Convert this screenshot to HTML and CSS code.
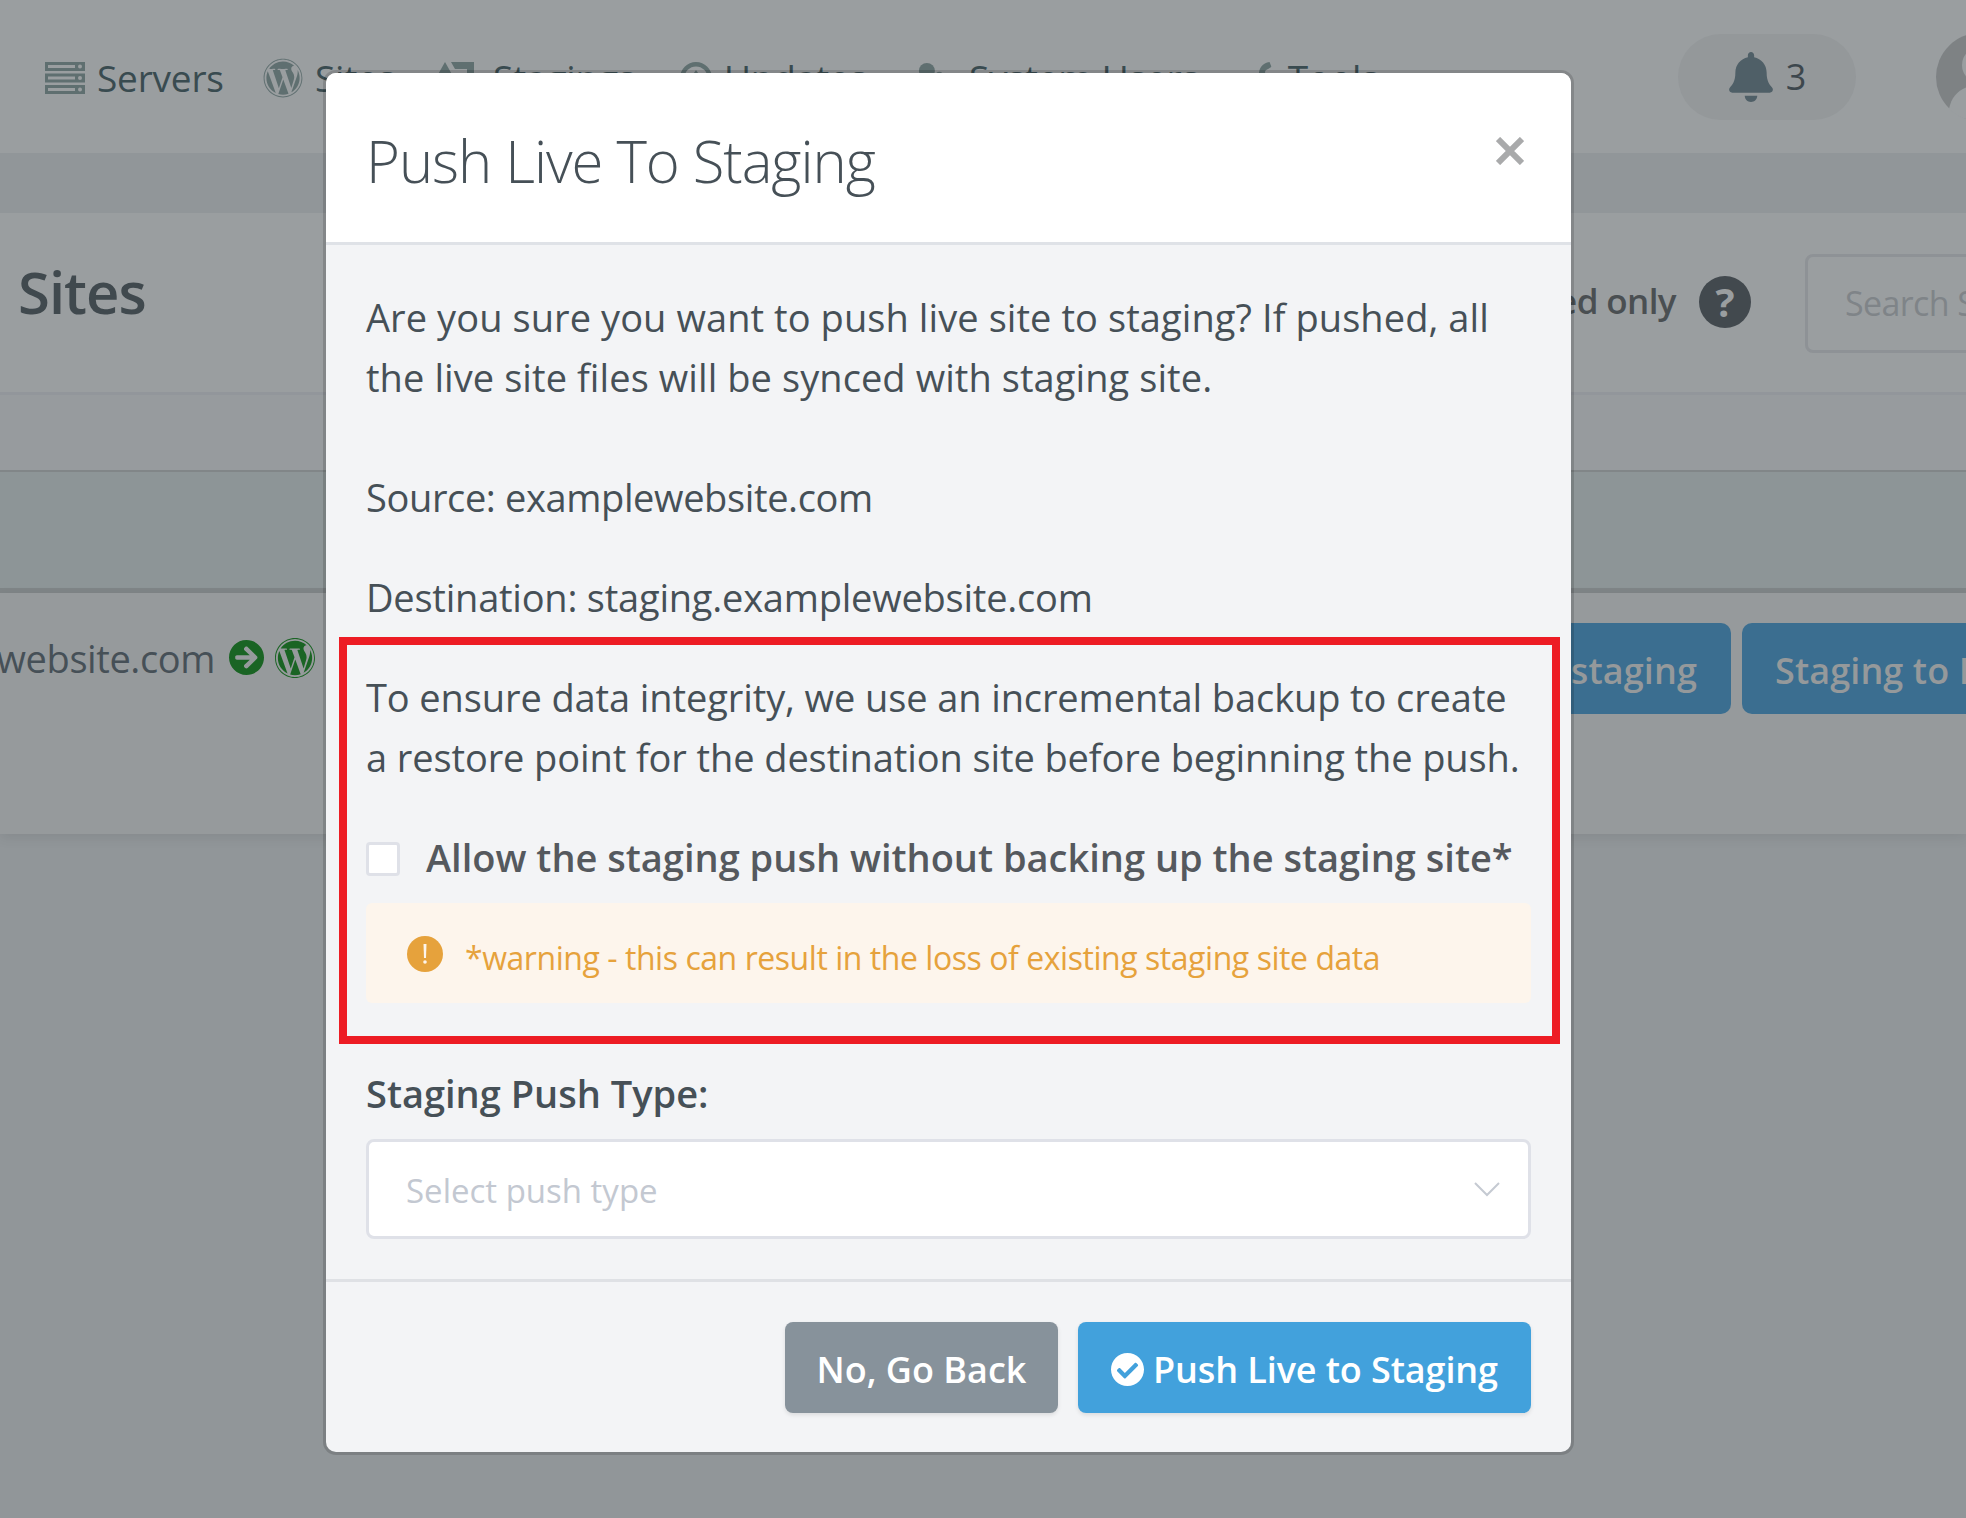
FILE: index.html
```html
<!DOCTYPE html>
<html lang="en">
<head>
    <meta charset="UTF-8">
    <meta name="viewport" content="width=device-width, initial-scale=1.0">
    <title>Push Live To Staging</title>
    <link rel="stylesheet" href="styles.css">
</head>
<body>
    <!-- Top navigation -->
    <header class="topnav">
        <nav class="nav-links">
            <a class="nav-item nav-servers">
                <svg class="nav-icon" viewBox="0 0 40 32"><path fill="#5f6f70" d="M0 0h40v9H0zM0 11.500h40v9H0zM0 23h40v9H0z"/><path fill="#9a9ea0" d="M3 3h27v3H3zM3 14.500h27v3H3zM3 26h27v3H3z"/><circle fill="#9a9ea0" cx="35" cy="4.500" r="2"/><circle fill="#9a9ea0" cx="35" cy="16" r="2"/><circle fill="#9a9ea0" cx="35" cy="27.500" r="2"/></svg>
                Servers
            </a>
            <a class="nav-item nav-sites">
                <svg class="nav-icon wp-icon" viewBox="0 0 512 512"><path fill="#5f6f70" d="M61.700 169.400l101.500 278C92.200 413 43.300 340.200 43.300 256c0-30.900 6.600-60.100 18.400-86.600zm337.900 75.900c0-26.300-9.400-44.500-17.500-58.700-10.800-17.500-20.900-32.400-20.900-49.900 0-19.600 14.800-37.800 35.700-37.800.9 0 1.800.1 2.800.2-37.900-34.700-88.300-55.900-143.700-55.900-74.300 0-139.700 38.100-177.800 95.900 5 .2 9.700.3 13.700.3 22.200 0 56.700-2.700 56.700-2.700 11.500-.7 12.800 16.200 1.400 17.500 0 0-11.500 1.300-24.300 2l77.500 230.400L249.800 247l-33.100-90.800c-11.500-.7-22.300-2-22.300-2-11.500-.7-10.100-18.200 1.300-17.500 0 0 35.100 2.700 56 2.700 22.200 0 56.700-2.700 56.700-2.700 11.500-.7 12.800 16.200 1.400 17.500 0 0-11.500 1.300-24.300 2l76.900 228.700 21.200-70.900c9-29.400 16-50.500 16-68.700zm-139.900 29.300l-63.800 185.500c19.100 5.600 39.200 8.700 60.100 8.700 24.800 0 48.500-4.300 70.600-12.100-.6-.9-1.100-1.900-1.500-2.900l-65.400-179.200zm183-120.700c.9 6.800 1.400 14 1.400 21.900 0 21.600-4 45.800-16.200 76.200l-65 187.900C426.200 403 468.700 334.500 468.700 256c0-37-9.400-71.800-26-102.100zM504 256c0 136.800-111.300 248-248 248C119.200 504 8 392.700 8 256 8 119.200 119.200 8 256 8c136.700 0 248 111.200 248 248zm-11.400 0c0-130.500-106.200-236.600-236.600-236.600C125.500 19.400 19.400 125.500 19.400 256S125.600 492.600 256 492.600c130.500 0 236.600-106.100 236.600-236.600z"/></svg>
                Sites
            </a>
            <a class="nav-item nav-stagings">
                <svg class="nav-icon" viewBox="0 0 38 32"><path fill="#5f6f70" d="M9 0l9 16H0zM15 0h23v26h-7V7H19z"/></svg>
                Stagings
            </a>
            <a class="nav-item nav-updates">
                <svg class="nav-icon" viewBox="0 0 36 36"><circle cx="18" cy="18" r="15.500" fill="none" stroke="#5f6f70" stroke-width="5"/><path fill="#5f6f70" d="M18 9l9 13H9z"/></svg>
                Updates
            </a>
            <a class="nav-item nav-users">
                <svg class="nav-icon" viewBox="0 0 28 36"><circle cx="10" cy="10" r="9" fill="#5f6f70"/><circle cx="24" cy="15" r="4" fill="#5f6f70"/></svg>
                System Users
            </a>
            <a class="nav-item nav-tools">
                <svg class="nav-icon" viewBox="0 0 20 36"><path fill="#5f6f70" d="M13 0C5 1 1 7 1 14c0 6 3 10 7 12V11c0-3 5-3 7-6z"/></svg>
                Tools
            </a>
        </nav>
        <div class="nav-right">
            <div class="bell-pill">
                <svg class="bell-icon" viewBox="0 0 448 512"><path fill="#4f5f67" d="M224 512c35.320 0 63.970-28.650 63.970-64H160.030c0 35.350 28.650 64 63.970 64zm215.390-149.710c-19.320-20.760-55.470-51.990-55.470-154.290 0-77.700-54.480-139.900-127.940-155.160V32c0-17.670-14.320-32-31.980-32s-31.980 14.330-31.980 32v20.840C118.560 68.100 64.080 130.300 64.080 208c0 102.300-36.150 133.530-55.470 154.290-6 6.450-8.660 14.160-8.610 21.710.11 16.400 12.980 32 32.100 32h383.800c19.120 0 32-15.600 32.100-32 .05-7.550-2.610-15.270-8.610-21.710z"/></svg>
                <span>3</span>
            </div>
            <svg class="avatar" viewBox="0 0 88 88"><circle cx="44" cy="44" r="44" fill="#7e8284"/><circle cx="44" cy="32" r="18" fill="#9a9ea0"/><path fill="#9a9ea0" d="M13 76c3-16 15-24 31-24s28 8 31 24c-8 8-19 12-31 12s-23-4-31-12z"/></svg>
        </div>
    </header>

    <div class="subnav"></div>

    <!-- Page heading -->
    <section class="page-head">
        <h1>Sites</h1>
        <div class="head-tools">
            <span class="filter-label">Archived only</span>
            <span class="help-dot">?</span>
            <div class="search-box">Search Sites</div>
        </div>
    </section>

    <div class="table-tools"></div>
    <div class="table-head"></div>

    <!-- Sites table row -->
    <section class="site-row">
        <div class="site-name"><span>examplewebsite.com</span></div>
        <svg class="row-arrow" viewBox="8 8 496 496"><path fill="#1a6424" d="M256 8c137 0 248 111 248 248S393 504 256 504 8 393 8 256 119 8 256 8zm-28.900 143.600l75.500 72.400H120c-13.300 0-24 10.700-24 24v16c0 13.300 10.700 24 24 24h182.600l-75.500 72.400c-9.700 9.300-9.900 24.800-.4 34.300l11 10.900c9.400 9.400 24.600 9.400 33.900 0L404.300 273c9.400-9.400 9.400-24.600 0-33.900L271.600 106.300c-9.400-9.400-24.600-9.400-33.900 0l-11 10.900c-9.500 9.600-9.300 25.100.4 34.400z"/></svg>
        <svg class="row-wp" viewBox="8 8 496 496"><path fill="#1a6424" d="M61.700 169.400l101.500 278C92.200 413 43.300 340.200 43.300 256c0-30.900 6.600-60.100 18.400-86.600zm337.900 75.900c0-26.300-9.400-44.500-17.500-58.700-10.800-17.500-20.900-32.400-20.900-49.900 0-19.600 14.800-37.800 35.700-37.800.9 0 1.800.1 2.800.2-37.900-34.700-88.300-55.900-143.700-55.900-74.300 0-139.700 38.100-177.800 95.900 5 .2 9.700.3 13.700.3 22.200 0 56.700-2.700 56.700-2.700 11.500-.7 12.800 16.200 1.400 17.500 0 0-11.500 1.300-24.300 2l77.500 230.400L249.800 247l-33.100-90.800c-11.500-.7-22.300-2-22.300-2-11.500-.7-10.100-18.200 1.300-17.500 0 0 35.100 2.700 56 2.700 22.200 0 56.700-2.700 56.700-2.700 11.500-.7 12.800 16.200 1.400 17.500 0 0-11.500 1.300-24.300 2l76.900 228.700 21.200-70.900c9-29.400 16-50.500 16-68.700zm-139.900 29.300l-63.800 185.500c19.100 5.600 39.200 8.700 60.100 8.700 24.800 0 48.500-4.300 70.600-12.100-.6-.9-1.100-1.900-1.500-2.900l-65.400-179.200zm183-120.700c.9 6.800 1.400 14 1.400 21.900 0 21.600-4 45.800-16.200 76.200l-65 187.900C426.200 403 468.700 334.500 468.700 256c0-37-9.400-71.800-26-102.100zM504 256c0 136.800-111.300 248-248 248C119.200 504 8 392.700 8 256 8 119.200 119.200 8 256 8c136.700 0 248 111.200 248 248zm-11.400 0c0-130.500-106.200-236.600-236.600-236.600C125.500 19.400 19.400 125.500 19.400 256S125.600 492.600 256 492.600c130.500 0 236.600-106.100 236.600-236.600z"/></svg>
        <div class="row-actions">
            <button class="row-btn">Live to staging</button>
            <button class="row-btn row-btn-last">Staging to Live</button>
        </div>
    </section>

    <!-- Modal over the page -->
    <div class="modal">
        <div class="modal-header">
            <h2>Push Live To Staging</h2>
            <svg class="modal-close" viewBox="0 0 28 28"><path d="M2 2l24 24M26 2L2 26" stroke="#a9aaab" stroke-width="6" fill="none"/></svg>
        </div>
        <div class="modal-body">
            <p class="intro">Are you sure you want to push live site to staging? If pushed, all<br>the live site files will be synced with staging site.</p>
            <p class="source">Source: examplewebsite.com</p>
            <p class="destination">Destination: staging.examplewebsite.com</p>
            <div class="highlight">
                <p class="note">To ensure data integrity, we use an incremental backup to create<br>a restore point for the destination site before beginning the push.</p>
                <label class="check-row"><span class="checkbox"></span>Allow the staging push without backing up the staging site*</label>
                <div class="warning">
                    <svg class="warning-icon" viewBox="0 0 36 36"><circle cx="18" cy="18" r="18" fill="#e6a23c"/><path fill="#fdf5ec" d="M16.500 8h3l-.5 14h-2z"/><circle cx="18" cy="26" r="1.800" fill="#fdf5ec"/></svg>
                    <span>*warning - this can result in the loss of existing staging site data</span>
                </div>
            </div>
            <div class="field-label">Staging Push Type:</div>
            <div class="select-box">
                <span>Select push type</span>
                <svg class="chevron" viewBox="0 0 26 15"><path d="M1 1l12 12L25 1" stroke="#c5cad2" stroke-width="2" fill="none"/></svg>
            </div>
        </div>
        <div class="modal-footer">
            <button class="btn btn-back">No, Go Back</button>
            <button class="btn btn-push">
                <svg class="btn-icon" viewBox="8 8 496 496"><path fill="#fff" d="M504 256c0 136.967-111.033 248-248 248S8 392.967 8 256 119.033 8 256 8s248 111.033 248 248zM227.314 387.314l184-184c6.248-6.248 6.248-16.379 0-22.627l-22.627-22.627c-6.248-6.249-16.379-6.249-22.628 0L216 308.118l-70.059-70.059c-6.248-6.248-16.379-6.248-22.628 0l-22.627 22.627c-6.248 6.248-6.248 16.379 0 22.627l104 104c6.249 6.249 16.379 6.249 22.628.001z"/></svg>
                Push Live to Staging
            </button>
        </div>
    </div>
</body>
</html>
```

FILE: styles.css
```css
/* General page styling */
html, body {
    height: 1518px;
}

body {
    position: relative;
    margin: 0;
    overflow: hidden;
    background: #919699;
    font-family: 'Open Sans', 'Noto Sans', sans-serif;
    color: #465057;
}

/* Top navigation */
.topnav {
    display: flex;
    align-items: center;
    height: 153px;
    padding-left: 45px;
    background: #9a9ea0;
}

.nav-links {
    display: flex;
    align-items: center;
}

.nav-item {
    display: flex;
    align-items: center;
    flex: none;
    gap: 12px;
    padding-top: 2px;
    font-size: 37px;
    letter-spacing: -0.2px;
    color: #394b50;
    white-space: nowrap;
}

.nav-icon {
    height: 32px;
    flex: none;
}

.wp-icon {
    height: 40px;
}

.nav-servers { width: 218px; }
.nav-sites { width: 173px; }
.nav-stagings { width: 244px; gap: 19px; }
.nav-updates { width: 238px; }
.nav-users { width: 340px; gap: 26px; }
.nav-tools { width: 130px; }

.nav-right {
    display: flex;
    align-items: center;
    gap: 80px;
    margin-left: auto;
    margin-right: -58px;
}

.bell-pill {
    display: flex;
    align-items: center;
    justify-content: center;
    gap: 12px;
    width: 178px;
    height: 86px;
    border-radius: 43px;
    background: #94989a;
    font-size: 36px;
    color: #3d474d;
}

.bell-icon {
    width: 46px;
    height: 50px;
}

.avatar {
    width: 88px;
    height: 88px;
    flex: none;
}

.subnav {
    height: 60px;
    background: #919699;
}

/* Page heading */
.page-head {
    display: flex;
    align-items: center;
    justify-content: space-between;
    box-sizing: border-box;
    height: 182px;
    padding: 0 0 20px 18px;
    background: #9a9ea0;
    border-bottom: 3px solid #92969b;
}

.page-head h1 {
    margin: 0 0 3px;
    font-size: 58px;
    font-weight: 600;
    letter-spacing: -1px;
    color: #40494e;
}

.head-tools {
    display: flex;
    align-items: center;
    margin-right: -240px;
    margin-top: 18px;
}

.filter-label {
    margin-bottom: 2px;
    font-size: 35px;
    font-weight: 600;
    letter-spacing: -0.6px;
    color: #4a4f52;
    white-space: nowrap;
}

.help-dot {
    display: flex;
    align-items: center;
    justify-content: center;
    width: 52px;
    height: 52px;
    margin-left: 23px;
    border-radius: 50%;
    background: #42494e;
    font-size: 40px;
    font-weight: 700;
    color: #9a9ea0;
}

.search-box {
    display: flex;
    align-items: center;
    box-sizing: border-box;
    width: 401px;
    height: 99px;
    margin: 3px 0 0 54px;
    padding-left: 37px;
    border: 3px solid #8e9296;
    border-radius: 8px;
    font-size: 34px;
    letter-spacing: -0.6px;
    color: #7f8488;
    white-space: nowrap;
}

/* Table */
.table-tools {
    height: 75px;
    background: #979b9e;
    border-bottom: 2px solid #818688;
}

.table-head {
    height: 116px;
    background: #8d9597;
    border-bottom: 5px solid #7f8587;
}

.site-row {
    display: flex;
    align-items: flex-start;
    box-sizing: border-box;
    height: 241px;
    padding-top: 30px;
    background: #969a9c;
    box-shadow: 0 4px 12px rgba(0, 0, 0, 0.08);
}

.site-name {
    display: flex;
    justify-content: flex-end;
    flex: none;
    width: 215px;
    margin-top: 9px;
    font-size: 38px;
    letter-spacing: -0.4px;
    color: #465057;
    white-space: nowrap;
}

.site-name span {
    flex: none;
}

.row-arrow {
    flex: none;
    width: 35px;
    height: 35px;
    margin: 17px 0 0 14px;
}

.row-wp {
    flex: none;
    width: 40px;
    height: 40px;
    margin: 15px 0 0 11px;
}

.row-actions {
    display: flex;
    gap: 11px;
    margin-left: auto;
    margin-right: -106px;
}

.row-btn {
    flex: none;
    height: 91px;
    padding: 4px 34px 0;
    border: none;
    border-radius: 10px;
    background: #3b6e90;
    font-family: inherit;
    font-size: 36px;
    font-weight: 600;
    letter-spacing: 0.1px;
    color: #95999b;
    white-space: nowrap;
}

.row-btn-last {
    width: 330px;
    text-align: left;
    padding-left: 33px;
}

/* Modal */
.modal {
    position: absolute;
    top: 73px;
    left: 326px;
    width: 1245px;
    border-radius: 10px;
    background: #f3f4f6;
    box-shadow: 0 0 0 3px rgba(0, 0, 0, 0.14);
}

.modal-header {
    position: relative;
    box-sizing: border-box;
    height: 172px;
    padding: 48px 40px 0;
    background: #fff;
    border-radius: 10px 10px 0 0;
    border-bottom: 3px solid #dfe2e7;
}

.modal-header h2 {
    margin: 0;
    font-size: 58px;
    font-weight: 300;
    line-height: 80px;
    letter-spacing: -1.05px;
    color: #465057;
}

.modal-close {
    position: absolute;
    top: 64px;
    right: 47px;
    width: 28px;
    height: 28px;
}

.modal-body {
    padding: 42px 40px 40px;
    font-size: 38px;
    line-height: 60px;
    letter-spacing: -0.22px;
}

.modal-body p {
    margin: 0;
}

.modal-body .intro {
    letter-spacing: 0.08px;
}

.modal-body .source {
    margin-top: 60px;
    letter-spacing: -0.37px;
}

.modal-body .destination {
    margin-top: 40px;
}

/* Red annotation box */
.highlight {
    margin: 10px -29px 19px -27px;
    padding: 22px 21px 33px 19px;
    border: 8px solid #ed1c24;
}

.modal-body .note {
    letter-spacing: -0.1px;
}

.check-row {
    display: flex;
    align-items: center;
    margin-top: 40px;
    font-weight: 600;
    letter-spacing: 0;
    color: #55595e;
    white-space: nowrap;
}

.checkbox {
    flex: none;
    box-sizing: border-box;
    width: 34px;
    height: 34px;
    margin: 4px 26px 0 0;
    border: 3px solid #dfe1e8;
    border-radius: 4px;
    background: #fff;
}

.warning {
    display: flex;
    align-items: center;
    box-sizing: border-box;
    height: 100px;
    margin-top: 16px;
    padding: 10px 0 0 41px;
    border-radius: 6px;
    background: #fdf5ec;
    font-size: 32px;
    letter-spacing: -0.45px;
    color: #e6a23c;
}

.warning-icon {
    width: 36px;
    height: 36px;
    margin: -8px 22px 0 0;
    flex: none;
}

.field-label {
    font-weight: 600;
    letter-spacing: 0;
    color: #465057;
}

.select-box {
    display: flex;
    align-items: center;
    justify-content: space-between;
    box-sizing: border-box;
    height: 100px;
    margin-top: 16px;
    padding: 0 28px 0 37px;
    border: 3px solid #dfe1e8;
    border-radius: 8px;
    background: #fff;
    font-size: 33px;
    letter-spacing: 0;
    color: #c3c8d1;
}

.select-box span {
    padding-top: 4px;
}

.chevron {
    width: 26px;
    height: 15px;
}

.modal-footer {
    display: flex;
    justify-content: flex-end;
    gap: 20px;
    padding: 40px 40px 39px;
    border-top: 3px solid #dfe1e5;
}

/* Buttons */
.btn {
    display: flex;
    align-items: center;
    justify-content: center;
    height: 91px;
    padding: 3px 0 0;
    border: none;
    border-radius: 8px;
    font-family: inherit;
    font-size: 36px;
    font-weight: 600;
    letter-spacing: 0;
    color: #fff;
    white-space: nowrap;
    box-shadow: 0 2px 4px rgba(0, 0, 0, 0.1);
}

.btn-back {
    width: 273px;
    background: #87929b;
}

.btn-push {
    gap: 9px;
    width: 453px;
    background: #42a1dc;
    letter-spacing: -0.1px;
}

.btn-icon {
    width: 33px;
    height: 33px;
}
```
